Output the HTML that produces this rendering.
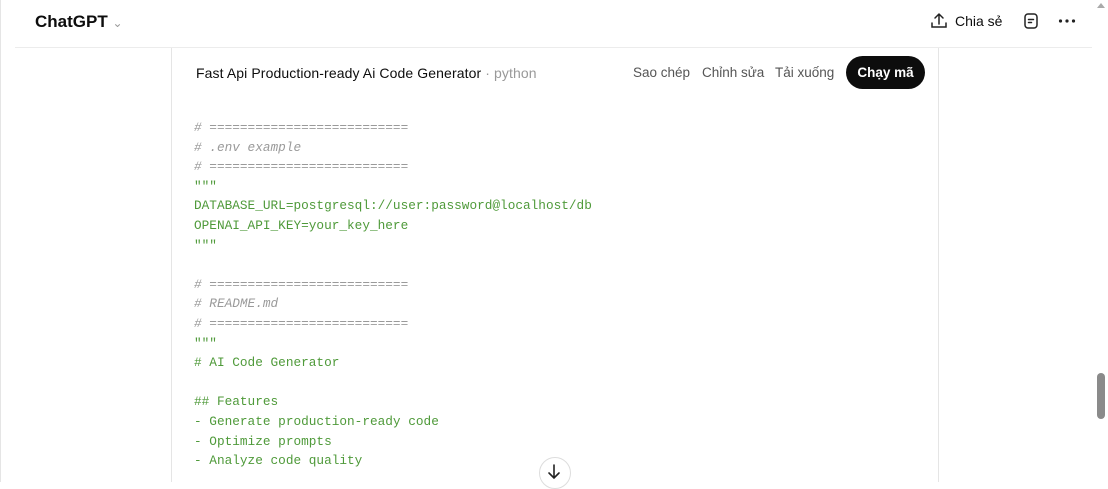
<!DOCTYPE html><html><head><meta charset="utf-8"><style>
body{margin:0;width:1108px;height:482px;overflow:hidden;background:#fff;font-family:"Liberation Sans",sans-serif;position:relative}
.a{position:absolute}
.code{position:absolute;left:194px;top:118px;font-family:"Liberation Mono",monospace;font-size:12.75px;line-height:19.6px;white-space:pre;color:#4f9a3a}
.c{color:#9a9a9a;font-style:italic}
.b{position:absolute;top:65px;font-size:13.5px;color:#555}
</style></head><body>
<div class="a" style="left:0;top:0;width:1px;height:482px;background:#e5e5e5"></div>
<div class="a" style="left:35px;top:12px;font-size:17px;font-weight:bold;color:#0d0d0d">ChatGPT <span style="font-weight:normal;color:#999;font-size:12px">&#8964;</span></div>
<div class="a" style="left:15px;top:47px;width:1077px;height:1px;background:#ececec"></div>
<svg class="a" style="left:930px;top:12px" width="18" height="18" viewBox="0 0 18 18" fill="none" stroke="#222" stroke-width="1.5" stroke-linecap="round"><path d="M9 2v10M5 6l4-4 4 4M2 11v4h14v-4"/></svg>
<div class="a" style="left:955px;top:13px;font-size:14px;color:#0d0d0d">Chia sẻ</div>
<svg class="a" style="left:1022px;top:12px" width="18" height="18" viewBox="0 0 18 18" fill="none" stroke="#222" stroke-width="1.5" stroke-linecap="round"><rect x="3" y="2" width="12" height="14" rx="3"/><path d="M6.5 7.5h5M6.5 10.5h3"/></svg>
<svg class="a" style="left:1058px;top:18px" width="18" height="6"><circle cx="2.5" cy="3" r="1.6" fill="#222"/><circle cx="9" cy="3" r="1.6" fill="#222"/><circle cx="15.5" cy="3" r="1.6" fill="#222"/></svg>
<div class="a" style="left:171px;top:48px;width:1px;height:434px;background:#e5e5e5"></div>
<div class="a" style="left:938px;top:48px;width:1px;height:434px;background:#e5e5e5"></div>
<div class="a" style="left:196px;top:65px;font-size:14px;color:#0d0d0d;letter-spacing:0.1px">Fast Api Production-ready Ai Code Generator <span style="color:#999">· python</span></div>
<div class="b" style="left:633px">Sao chép</div>
<div class="b" style="left:702px">Chỉnh sửa</div>
<div class="b" style="left:775px">Tải xuống</div>
<div class="a" style="left:846px;top:56px;width:79px;height:33px;border-radius:17px;background:#0d0d0d;color:#fff;font-size:13.5px;font-weight:bold;text-align:center;line-height:33px">Chạy mã</div>
<div class="code"><span class="c"># ==========================
# .env example
# ==========================</span>
"""
DATABASE_URL=postgresql://user:password@localhost/db
OPENAI_API_KEY=your_key_here
"""

<span class="c"># ==========================
# README.md
# ==========================</span>
"""
# AI Code Generator

## Features
- Generate production-ready code
- Optimize prompts
- Analyze code quality</div>
<div class="a" style="left:539px;top:457px;width:30px;height:30px;border-radius:50%;border:1px solid #ddd;background:#fff"></div>
<svg class="a" style="left:545px;top:463px" width="18" height="18" viewBox="0 0 18 18" fill="none" stroke="#222" stroke-width="1.6" stroke-linecap="round"><path d="M9 2v13M4 10l5 5 5-5"/></svg>
<div class="a" style="left:1097px;top:373px;width:8px;height:46px;border-radius:4px;background:#8a8a8a"></div>
<div class="a" style="left:1097px;top:3px;width:0;height:0;border-left:4px solid transparent;border-right:4px solid transparent;border-bottom:5px solid #aaa"></div>
</body></html>
